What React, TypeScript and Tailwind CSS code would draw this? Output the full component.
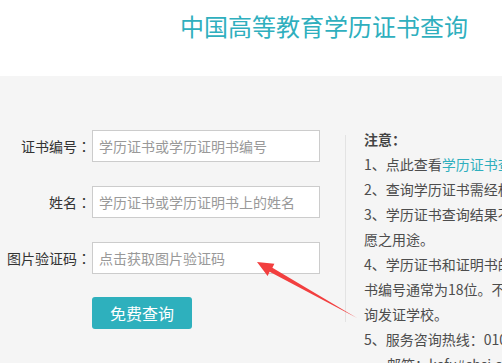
const fields = [
  { label: '证书编号', placeholder: '学历证书或学历证明书编号' },
  { label: '姓名', placeholder: '学历证书或学历证明书上的姓名' },
  { label: '图片验证码', placeholder: '点击获取图片验证码' },
];

// red annotation arrow pointing at the captcha field
function Arrow() {
  return (
    <svg
      className="absolute left-[250px] top-[179px] pointer-events-none"
      width="115"
      height="70"
      viewBox="0 0 115 70"
    >
      <polygon
        points="7,7 24.4,8.7 22.4,12.8 107,63 19.6,16.8 17.6,20.9"
        fill="#f23f3f"
      />
    </svg>
  );
}

export default function App() {
  return (
    <div className="w-full h-[363px] overflow-hidden bg-[#f5f5f5] font-['Noto_Sans_CJK_SC',sans-serif]">
      <header className="h-[76px] bg-white pl-[180px] pt-[9px]">
        <h1 className="text-[24px] leading-[34px] text-[#2fafbe] whitespace-nowrap">
          中国高等教育学历证书查询
        </h1>
      </header>

      <main className="relative flex items-start pt-[54px]">
        <div className="w-[345px] shrink-0">
          <div className="flex flex-col gap-[24px]">
            {fields.map((f) => (
              <div key={f.label} className="flex items-center">
                <label className="w-[92px] pr-[1px] text-right text-[14px] text-[#333] whitespace-nowrap">
                  {f.label}
                  <span className="font-['Noto_Sans_CJK_JP',sans-serif]">：</span>
                </label>
                <input
                  placeholder={f.placeholder}
                  className="w-[228px] h-[32px] border border-[#ccc] bg-white px-[6px] text-[14px] text-[#333] placeholder:text-[#999] outline-none"
                />
              </div>
            ))}
          </div>
          <button className="ml-[92px] mt-[23px] w-[100px] h-[32px] rounded-[3px] bg-[#2eb0bd] text-white text-[16px]">
            免费查询
          </button>
        </div>

        <div className="flex items-start shrink-0">
          <div className="mt-[5px] h-[187px] w-px bg-[#e3e3e3]" />
          <div className="-mt-[3px] pl-[18px] text-[14px] leading-[25px] text-[#4d4d4d] whitespace-nowrap">
            <p className="font-bold text-[#444]">注意：</p>
            <p>
              1、点此查看<span className="text-[#2fafbe]">学历证书查询范围说明。</span>
            </p>
            <p>2、查询学历证书需经机构授权后方可查询。</p>
            <p>3、学历证书查询结果不得用于除本人意</p>
            <p>愿之用途。</p>
            <p>4、学历证书和证明书的编号由数字组成，证</p>
            <p>书编号通常为18位。不能确定证书编号的，请咨</p>
            <p>询发证学校。</p>
            <p>5、服务咨询热线：010-82199588</p>
            <p className="pl-[23px]">邮箱：kefu#chsi.com.cn</p>
          </div>
        </div>

        <Arrow />
      </main>
    </div>
  );
}
